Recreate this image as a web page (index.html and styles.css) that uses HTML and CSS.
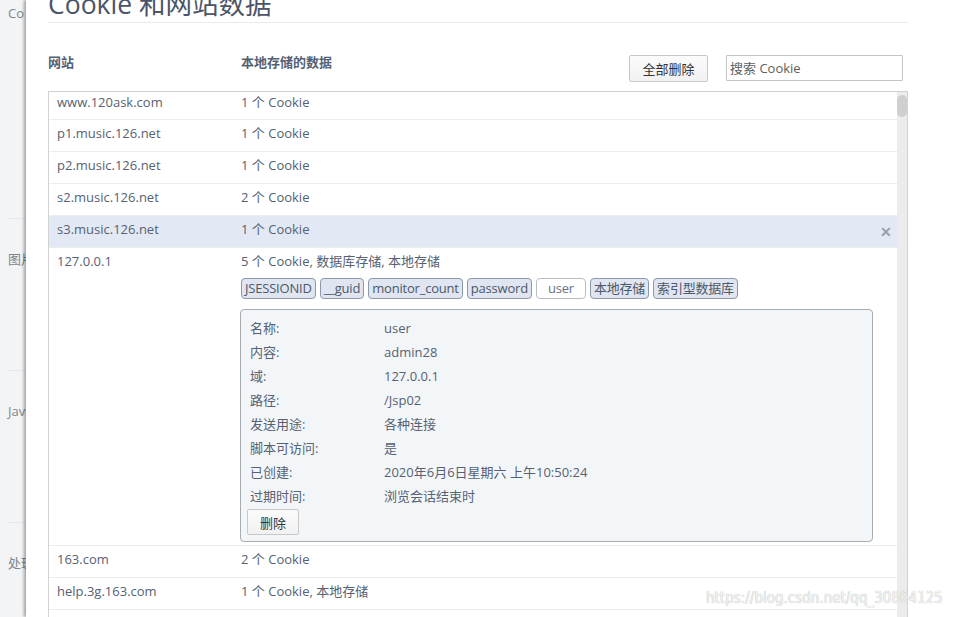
FILE: index.html
```html
<!DOCTYPE html>
<html>
<head>
<meta charset="utf-8">
<link rel="stylesheet" href="styles.css">
</head>
<body>
<div class="page">
  <aside class="bg-strip">
    <div class="bg-sec first"><span>Co</span></div>
    <div class="bg-sec"><span>图片</span></div>
    <div class="bg-sec"><span>Java</span></div>
    <div class="bg-sec"><span>处理</span></div>
  </aside>
  <main class="dialog">
    <h1 class="title">Cookie 和网站数据</h1>
    <div class="toolbar">
      <div class="col-site head">网站</div>
      <div class="col-data head">本地存储的数据</div>
      <button class="btn btn-all">全部删除</button>
      <input class="search" type="text" placeholder="搜索 Cookie">
    </div>
    <div class="list">
      <div class="rows">
        <div class="row first"><div class="col-site">www.120ask.com</div><div class="col-data">1 个 Cookie</div></div>
        <div class="row"><div class="col-site">p1.music.126.net</div><div class="col-data">1 个 Cookie</div></div>
        <div class="row"><div class="col-site">p2.music.126.net</div><div class="col-data">1 个 Cookie</div></div>
        <div class="row"><div class="col-site">s2.music.126.net</div><div class="col-data">2 个 Cookie</div></div>
        <div class="row hover"><div class="col-site">s3.music.126.net</div><div class="col-data">1 个 Cookie</div><span class="close">✕</span></div>
        <div class="row expanded">
          <div class="col-site">127.0.0.1</div>
          <div class="col-data">
            <div class="summary">5 个 Cookie, 数据库存储, 本地存储</div>
            <div class="tags">
              <span class="tag">JSESSIONID</span>
              <span class="tag">__guid</span>
              <span class="tag">monitor_count</span>
              <span class="tag">password</span>
              <span class="tag sel">user</span>
              <span class="tag">本地存储</span>
              <span class="tag">索引型数据库</span>
            </div>
            <div class="detail">
              <div class="kv"><span class="k">名称:</span><span>user</span></div>
              <div class="kv"><span class="k">内容:</span><span>admin28</span></div>
              <div class="kv"><span class="k">域:</span><span>127.0.0.1</span></div>
              <div class="kv"><span class="k">路径:</span><span>/Jsp02</span></div>
              <div class="kv"><span class="k">发送用途:</span><span>各种连接</span></div>
              <div class="kv"><span class="k">脚本可访问:</span><span>是</span></div>
              <div class="kv"><span class="k">已创建:</span><span>2020年6月6日星期六 上午10:50:24</span></div>
              <div class="kv"><span class="k">过期时间:</span><span>浏览会话结束时</span></div>
              <button class="btn btn-del">删除</button>
            </div>
          </div>
        </div>
        <div class="row"><div class="col-site">163.com</div><div class="col-data">2 个 Cookie</div></div>
        <div class="row"><div class="col-site">help.3g.163.com</div><div class="col-data">1 个 Cookie, 本地存储</div></div>
        <div class="row"><div class="col-site">&nbsp;</div><div class="col-data">&nbsp;</div></div>
      </div>
      <div class="scrollbar"><div class="thumb"></div></div>
    </div>
  </main>
</div>
<div class="watermark">https://blog.csdn.net/qq_30864125</div>
</body>
</html>
```
FILE: styles.css
```css
html, body {
  margin: 0;
  padding: 0;
  height: 100%;
  overflow: hidden;
  background: #fff;
}
body {
  font-family: "Open Sans", "Noto Sans CJK SC", sans-serif;
  font-size: 13px;
  color: #566172;
}
.page {
  display: flex;
  height: 617px;
}
.bg-strip {
  width: 26px;
  flex: none;
  background: #f3f4f6;
  overflow: hidden;
  white-space: nowrap;
}
.bg-sec {
  height: 152px;
  border-top: 1px solid #e6e8eb;
  margin-left: 8px;
  padding-top: 31px;
  box-sizing: border-box;
  line-height: 18px;
  font-size: 13px;
  color: #80858c;
}
.bg-sec.first {
  height: 218px;
  border-top: none;
  padding-top: 4px;
}
.dialog {
  flex: 1;
  background: #fff;
  padding-left: 22px;
  box-shadow: -2px 0 3px rgba(0,0,0,0.35);
  position: relative;
  min-width: 0;
}
.title {
  margin: -14px 0 0 0;
  width: 860px;
  height: 36px;
  line-height: 36px;
  font-size: 26.5px;
  font-weight: normal;
  color: #4b5567;
  border-bottom: 1px solid #e8eaed;
}
.toolbar {
  width: 860px;
  display: flex;
  align-items: center;
  margin-top: 31px;
  height: 28px;
}
.col-site {
  width: 184px;
  flex: none;
}
.col-data {
  flex: 1;
  min-width: 0;
}
.head {
  font-weight: bold;
  color: #546175;
  margin-top: -14px;
}
.toolbar .col-site { width: 193px; }
.toolbar .col-data { flex: none; width: 388px; }
.btn {
  font-family: "Open Sans", "Noto Sans CJK SC", sans-serif;
  font-size: 13px;
  color: #333;
  background: linear-gradient(#fbfbfb, #f1f1f1);
  border: 1px solid #c8c8c8;
  border-radius: 2px;
  padding: 0;
}
.btn-all {
  width: 79px;
  height: 27px;
}
.search {
  margin-left: 18px;
  width: 177px;
  height: 26px;
  box-sizing: border-box;
  border: 1px solid #c4c4c4;
  border-radius: 1px;
  padding: 0 3px;
  font-family: "Open Sans", "Noto Sans CJK SC", sans-serif;
  font-size: 13px;
  color: #666;
}
.search::placeholder { color: #606060; }
.list {
  width: 858px;
  margin-top: 9px;
  border: 1px solid #d2d2d2;
  height: 600px;
  display: flex;
  overflow: hidden;
}
.rows {
  flex: 1;
  min-width: 0;
}
.row {
  display: flex;
  box-sizing: border-box;
  height: 32px;
  padding-top: 3px;
  line-height: 20px;
  align-items: flex-start;
  border-bottom: 1px solid #ececec;
  position: relative;
}
.row .col-site { padding-left: 8px; width: 184px; }
.row.first {
  height: 28px;
  padding-top: 0;
}
.row.hover { background: #e3e9f4; }
.close {
  position: absolute;
  right: 5px;
  top: 6px;
  font-size: 14px;
  line-height: 20px;
  color: #9aa0a8;
  font-weight: bold;
}
.row.expanded {
  height: auto;
  padding-top: 3px;
  padding-bottom: 3px;
}
.summary { line-height: 20px; }
.tags {
  display: flex;
  gap: 4px;
  margin-top: 7px;
}
.tag {
  height: 19px;
  line-height: 19px;
  padding: 0 3px;
  border: 1px solid #8c98ab;
  border-radius: 4px;
  background: #dfe5f1;
  color: #4d5868;
  letter-spacing: -0.2px;
}
.tag.sel {
  background: #fff;
  border-color: #b9bdc3;
  padding: 0 11px;
  color: #6a7280;
}
.detail {
  margin-top: 10px;
  margin-left: -1px;
  width: 633px;
  border: 1px solid #a8acb0;
  border-radius: 4px;
  background: #f3f6f8;
  padding: 6px 0 5px 6px;
  box-sizing: border-box;
  height: 233px;
}
.kv {
  display: flex;
  height: 24px;
  line-height: 24px;
  padding-left: 3px;
}
.kv .k { width: 134px; flex: none; }
.btn-del {
  margin-top: 1px;
  width: 52px;
  height: 26px;
}
.scrollbar {
  width: 10px;
  flex: none;
  background: #ececec;
  padding-top: 3px;
}
.thumb {
  width: 10px;
  height: 22px;
  border-radius: 5px;
  background: #cfcfcf;
}
.watermark {
  position: absolute;
  left: 706px;
  top: 589px;
  font-family: "Liberation Sans Narrow", "DejaVu Sans Condensed", sans-serif;
  font-size: 15px;
  color: #f4f4f4;
  text-shadow: 0 0 1px #a0a0a0;
}
```
